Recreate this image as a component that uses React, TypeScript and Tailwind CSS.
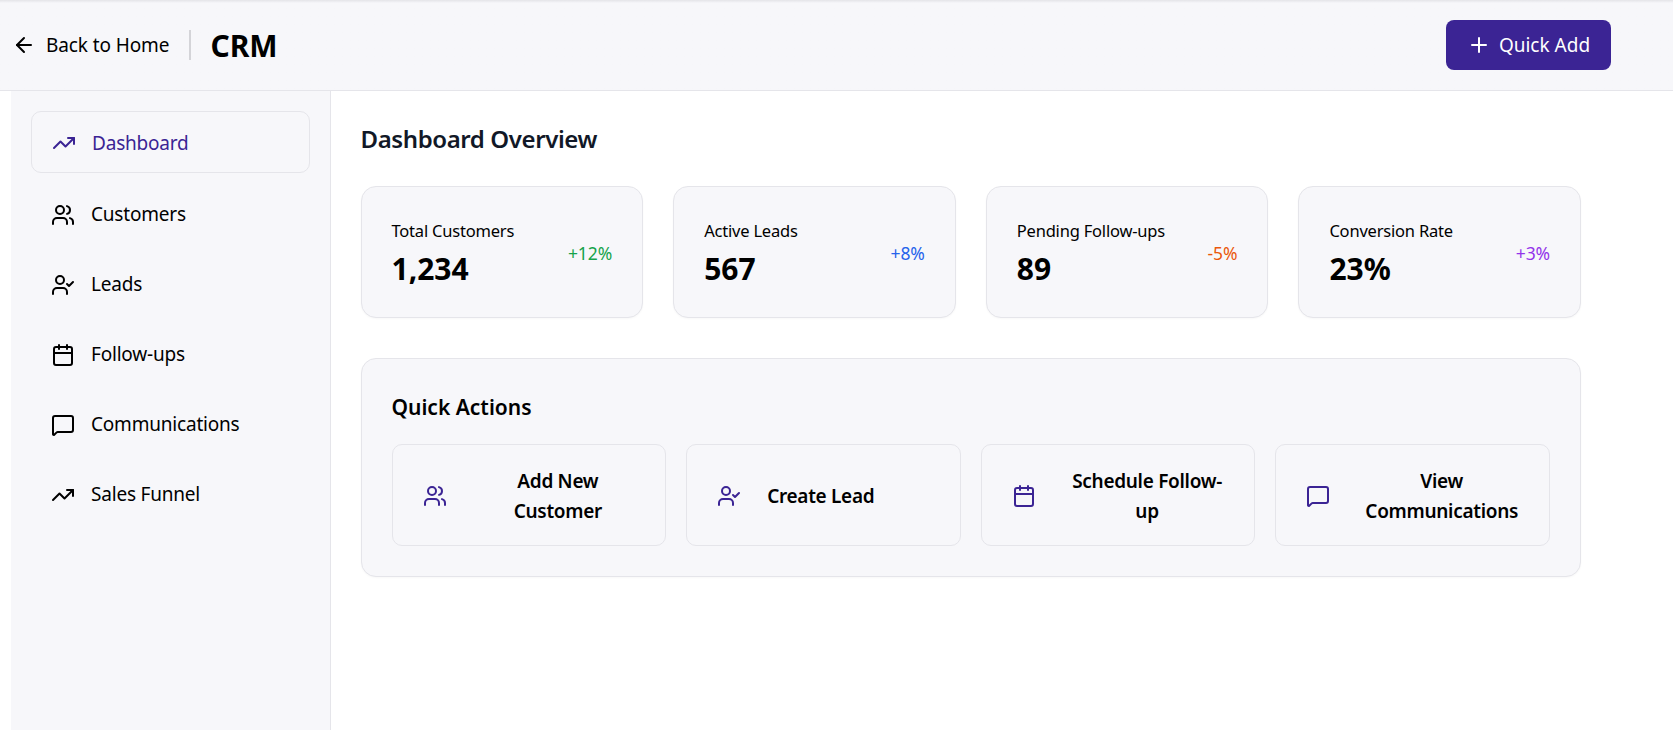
import { ArrowLeft, Calendar, MessageSquare, Plus, TrendingUp, UserCheck, Users } from 'lucide-react'

const navItems = [
  { label: 'Dashboard', icon: TrendingUp, active: true },
  { label: 'Customers', icon: Users },
  { label: 'Leads', icon: UserCheck },
  { label: 'Follow-ups', icon: Calendar },
  { label: 'Communications', icon: MessageSquare },
  { label: 'Sales Funnel', icon: TrendingUp },
]

const stats = [
  { label: 'Total Customers', value: '1,234', change: '+12%', color: 'text-[#16a34a]' },
  { label: 'Active Leads', value: '567', change: '+8%', color: 'text-[#2563eb]' },
  { label: 'Pending Follow-ups', value: '89', change: '-5%', color: 'text-[#ea580c]' },
  { label: 'Conversion Rate', value: '23%', change: '+3%', color: 'text-[#9333ea]' },
]

const actions = [
  { label: 'Add New Customer', icon: Users },
  { label: 'Create Lead', icon: UserCheck },
  { label: 'Schedule Follow-up', icon: Calendar },
  { label: 'View Communications', icon: MessageSquare },
]

export default function App() {
  return (
    <div className="min-h-[730px] bg-white text-black font-['Noto_Sans',sans-serif] flex flex-col">
      {/* Header */}
      <header className="h-[91px] border-b border-[#e5e5ea] bg-gradient-to-b from-[#e4e4e8] from-0% to-[#f7f7fa] to-[3px] flex items-center justify-between pl-[12px] pr-[62px]">
        <div className="flex items-center">
          <a className="flex items-center gap-[10px] text-[19px] tracking-[-0.1px]">
            <ArrowLeft size={24} />
            <span className="pt-[1px]">Back to Home</span>
          </a>
          <div className="w-[2px] h-[30px] bg-[#d4d4d8] ml-[20px] mr-[19px]" />
          <h1 className="text-[30px] font-bold">CRM</h1>
        </div>
        <button className="w-[165px] h-[50px] rounded-[8px] bg-[#3b2494] text-white text-[19px] flex items-center justify-center gap-[8px]">
          <Plus size={24} />
          Quick Add
        </button>
      </header>

      <div className="flex flex-1">
        {/* Sidebar */}
        <aside className="ml-[11px] w-[320px] h-[639px] bg-[#f7f7fa] border-r border-[#e5e5ea] p-5 flex flex-col gap-[11px]">
          {navItems.map((item) => (
            <div
              key={item.label}
              className={`flex items-center gap-[16px] px-5 text-[19px] tracking-[-0.2px] rounded-[10px] ${
                item.active ? 'h-[62px] mb-[1px] pt-[2px] border border-[#e5e5ea] text-[#3b2494]' : 'h-[59px]'
              }`}
            >
              <item.icon size={24} />
              {item.label}
            </div>
          ))}
        </aside>

        {/* Main */}
        <main className="w-[1280px] py-[30px] pl-[29.5px] pr-[30px]">
          <h2 className="text-[24px] tracking-[-0.4px] font-semibold text-[#111827] mb-[29px] leading-[36px]">
            Dashboard Overview
          </h2>

          <div className="grid grid-cols-4 gap-[30px] mb-10">
            {stats.map((stat) => (
              <div
                key={stat.label}
                className="h-[132px] bg-[#f7f7fa] border border-[#e5e5ea] rounded-[15px] shadow-[0_1px_2px_rgba(0,0,0,0.03)] px-[30px] flex items-center justify-between"
              >
                <div className="mt-[4px]">
                  <div className="text-[16.5px] leading-[24px] tracking-[-0.2px] mb-[5px]">{stat.label}</div>
                  <div className="text-[30px] leading-[42px] font-bold">{stat.value}</div>
                </div>
                <span className={`mt-[2px] text-[17.5px] tracking-[-0.1px] ${stat.color}`}>{stat.change}</span>
              </div>
            ))}
          </div>

          <section className="h-[219px] bg-[#f7f7fa] border border-[#e5e5ea] rounded-[15px] shadow-[0_1px_2px_rgba(0,0,0,0.03)] p-[30px]">
            <h3 className="text-[21px] font-semibold leading-[30px] mb-[22px] mt-[3px]">Quick Actions</h3>
            <div className="grid grid-cols-4 gap-5">
              {actions.map((action) => (
                <button
                  key={action.label}
                  className="h-[102px] border border-[#e5e5ea] rounded-[10px] pl-5 pr-[17px] pt-[22px] pb-5 flex items-center gap-[16px] text-[19px] leading-[30px] font-semibold tracking-[-0.3px] text-center"
                >
                  <span className="p-2.5 text-[#3b2494] shrink-0">
                    <action.icon size={24} />
                  </span>
                  <span className="pr-[5px]">{action.label}</span>
                </button>
              ))}
            </div>
          </section>
        </main>
      </div>
    </div>
  )
}
